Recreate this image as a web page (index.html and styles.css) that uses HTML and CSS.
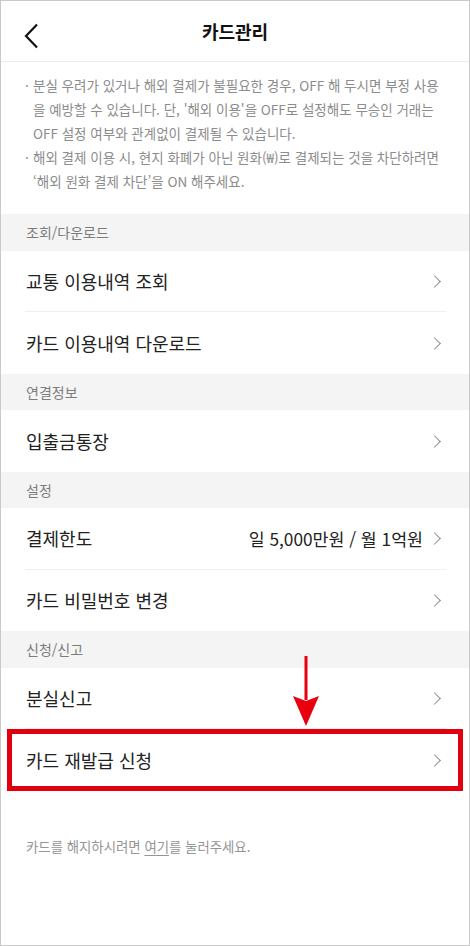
FILE: index.html
```html
<!DOCTYPE html>
<html lang="ko">
<head>
<meta charset="utf-8">
<title>카드관리</title>
<link rel="stylesheet" href="styles.css">
</head>
<body>
<div class="screen">
  <header class="topbar">
    <svg class="back" width="16" height="26" viewBox="0 0 16 26"><path d="M13 1.5 L2 13 L13 24.5" fill="none" stroke="#111" stroke-width="2.2" stroke-linejoin="miter"/></svg>
    <h1 class="title">카드관리</h1>
  </header>

  <section class="notice">
    <div class="note"><span class="dot">·</span><p>분실 우려가 있거나 해외 결제가 불필요한 경우, OFF 해 두시면 부정 사용<br>을 예방할 수 있습니다. 단, '해외 이용'을 OFF로 설정해도 무승인 거래는<br>OFF 설정 여부와 관계없이 결제될 수 있습니다.</p></div>
    <div class="note"><span class="dot">·</span><p>해외 결제 이용 시, 현지 화폐가 아닌 원화(₩)로 결제되는 것을 차단하려면<br>‘해외 원화 결제 차단’을 ON 해주세요.</p></div>
  </section>

  <div class="band">조회/다운로드</div>
  <div class="row"><div class="row-inner"><span class="label">교통 이용내역 조회</span><span class="chev"></span></div></div>
  <div class="row last"><div class="row-inner"><span class="label">카드 이용내역 다운로드</span><span class="chev"></span></div></div>

  <div class="band">연결정보</div>
  <div class="row last"><div class="row-inner"><span class="label">입출금통장</span><span class="chev"></span></div></div>

  <div class="band">설정</div>
  <div class="row"><div class="row-inner"><span class="label">결제한도</span><span class="value">일 5,000만원 / 월 1억원</span><span class="chev"></span></div></div>
  <div class="row last"><div class="row-inner"><span class="label">카드 비밀번호 변경</span><span class="chev"></span></div></div>

  <div class="band">신청/신고</div>
  <div class="row"><div class="row-inner"><span class="label">분실신고</span><span class="chev"></span></div></div>
  <div class="row last highlight"><div class="row-inner"><span class="label">카드 재발급 신청</span><span class="chev"></span></div>
    <div class="redbox"></div>
    <svg class="arrow" width="28" height="72" viewBox="0 0 28 72"><rect x="12.5" y="0" width="3" height="44" fill="#e8000e"/><path d="M1 40 L14 45 L27 40 L14 70 Z" fill="#e8000e"/></svg>
  </div>

  <p class="footer">카드를 해지하시려면 <u>여기</u>를 눌러주세요.</p>
</div>
</body>
</html>
```

FILE: styles.css
```css
* { box-sizing: border-box; }
html, body { margin: 0; padding: 0; background: #fff; }
body {
  font-family: "Noto Sans CJK KR", "Noto Sans", sans-serif;
  color: #222;
}
.screen {
  width: 470px;
  height: 946px;
  border: 1px solid #c9c9c9;
  overflow: hidden;
  position: relative;
}
.topbar {
  height: 61px;
  display: flex;
  align-items: center;
  justify-content: center;
  position: relative;
  border-bottom: 1px solid #ececec;
}
.back {
  position: absolute;
  left: 23px;
  top: 22px;
}
.title {
  margin: 0;
  font-size: 18px;
  font-weight: 700;
  color: #111;
  letter-spacing: 0;
}
.notice {
  padding: 11px 4px 21px 24px;
}
.note {
  display: flex;
  font-size: 13.5px;
  line-height: 24px;
  color: #8c8c8c;
}
.note .dot { width: 8px; flex: none; }
.note p { margin: 0; white-space: nowrap; }
.band {
  height: 36.5px;
  background: #f4f4f4;
  padding-left: 25px;
  display: flex;
  align-items: center;
  font-size: 14px;
  color: #7c7c7c;
}
.row {
  height: 61.5px;
  padding: 0 23px 0 24px;
  position: relative;
}
.row-inner {
  height: 100%;
  display: flex;
  align-items: center;
  border-bottom: 1px solid #efefef;
  padding-left: 1px;
}
.row.last .row-inner { border-bottom: none; }
.label {
  font-size: 18px;
  color: #222;
  flex: 1;
}
.value {
  font-size: 17.3px;
  color: #222;
  margin-right: 10px;
}
.chev {
  width: 8px;
  height: 12px;
  margin-right: 5px;
  position: relative;
}
.chev::before {
  content: "";
  position: absolute;
  left: -3px;
  top: 2px;
  width: 8px;
  height: 8px;
  border-top: 1.3px solid #8e8e8e;
  border-right: 1.3px solid #8e8e8e;
  transform: rotate(45deg);
}
.redbox {
  position: absolute;
  left: 6px;
  right: 6px;
  top: 0;
  height: 62px;
  border: 5px solid #e2000f;
}
.arrow {
  position: absolute;
  left: 291px;
  top: -73px;
}
.footer {
  margin: 45px 0 0 25px;
  font-size: 13.4px;
  line-height: 20px;
  color: #959595;
}
.footer u { text-underline-offset: 3px; }
```
